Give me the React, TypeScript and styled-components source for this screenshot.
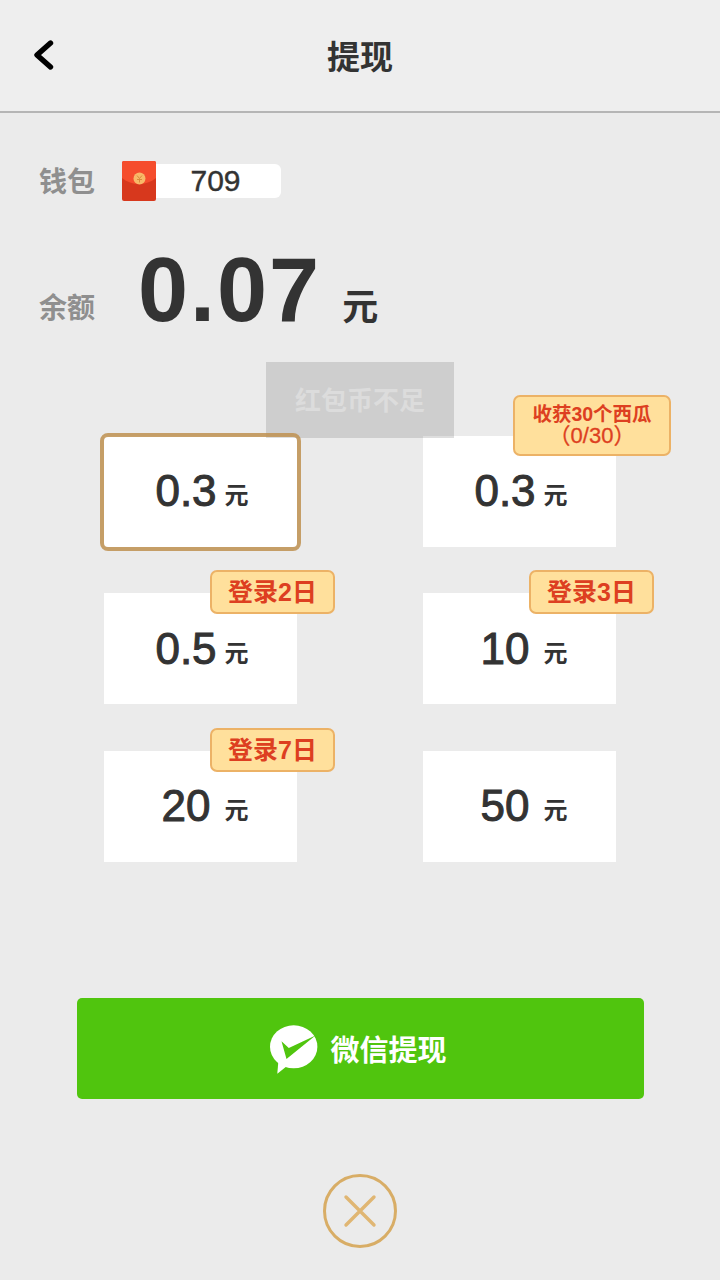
import React from "react";
import styled, { createGlobalStyle } from "styled-components";

const Global = createGlobalStyle`
  html, body { margin: 0; padding: 0; background: #ebebeb; }
  * { box-sizing: border-box; }
  body { font-family: "Liberation Sans", "Noto Sans CJK SC", sans-serif; color: #333; }
`;

const Page = styled.div`
  position: relative;
  width: 720px;
  height: 1280px;
  background: #ebebeb;
  overflow: hidden;
`;

const Header = styled.header`
  position: relative;
  height: 113px;
  background: #eeeeee;
  border-bottom: 2px solid #b5b5b5;
  display: flex;
  align-items: center;
  justify-content: center;
  padding-top: 3px;
`;

const BackButton = styled.button`
  position: absolute;
  left: 31px;
  top: 37px;
  width: 26px;
  height: 36px;
  padding: 0;
  border: 0;
  background: none;
  display: block;
`;

const Title = styled.h1`
  margin: 0;
  font-size: 33px;
  line-height: 1;
  font-weight: 700;
  color: #333;
`;

const InfoRow = styled.div<{ $top: number }>`
  display: flex;
  align-items: center;
  padding-left: 39px;
  margin-top: ${(p) => p.$top}px;
`;

const Label = styled.span<{ $low?: boolean }>`
  font-size: 28px;
  line-height: 36px;
  font-weight: 700;
  color: #8f8f8f;
  width: 83px;
  ${(p) => (p.$low ? "align-self: flex-end; margin-bottom: 13px;" : "margin-top: 4px;")}
`;

const Wallet = styled.div`
  display: flex;
  align-items: center;
  width: 159px;
  height: 40px;
`;

const WalletValue = styled.div`
  width: 125px;
  height: 34px;
  background: #fff;
  border-radius: 0 6px 6px 0;
  font-size: 30px;
  line-height: 34px;
  text-align: center;
  color: #333;
  padding-right: 6px;
  -webkit-text-stroke: 0.4px #333;
`;

const Amount = styled.span`
  font-size: 90px;
  font-weight: 700;
  letter-spacing: 2px;
  line-height: 100px;
  margin-left: 16px;
  padding-top: 1px;
  color: #333;
`;

const AmountUnit = styled.span`
  font-size: 36px;
  font-weight: 700;
  margin-left: 21px;
  line-height: 50px;
  align-self: flex-end;
  margin-bottom: 7px;
  color: #333;
`;

const Toast = styled.div`
  position: absolute;
  left: 266px;
  top: 362px;
  width: 188px;
  height: 76px;
  padding-bottom: 3px;
  background: rgba(90, 90, 90, 0.2);
  color: #dcdcdc;
  font-size: 26px;
  font-weight: 700;
  display: flex;
  align-items: center;
  justify-content: center;
  z-index: 5;
`;

const Grid = styled.div`
  display: grid;
  grid-template-columns: 193px 193px;
  grid-auto-rows: 111px;
  column-gap: 126px;
  row-gap: 46.5px;
  margin: 95.8px 0 0 104px;
`;

const Card = styled.div<{ $selected?: boolean }>`
  position: relative;
  background: #fff;
  display: flex;
  align-items: center;
  justify-content: center;
  padding-left: 2px;
  ${(p) =>
    p.$selected
      ? `&::after { content: ""; position: absolute; left: -4px; right: -4px; top: -3px; bottom: -4px; border: 4px solid rgba(190, 145, 80, 0.85); border-radius: 8px; z-index: 6; }`
      : ""}
`;

const Price = styled.span`
  font-size: 44px;
  line-height: 50px;
  color: #333;
  -webkit-text-stroke: 1px #333;
  min-width: 63px;
  text-align: center;
`;

const Unit = styled.span`
  font-size: 24px;
  font-weight: 700;
  color: #333;
  margin-left: 7px;
  margin-top: 10px;
  line-height: 30px;
`;

const Badge = styled.div<{ $wide?: boolean }>`
  position: absolute;
  z-index: 7;
  top: ${(p) => (p.$wide ? -41 : -23)}px;
  right: ${(p) => (p.$wide ? -55 : -38)}px;
  width: ${(p) => (p.$wide ? 158 : 125)}px;
  height: ${(p) => (p.$wide ? 61 : 44)}px;
  background: #ffe09c;
  border: 2px solid #ecb266;
  border-radius: 7px;
  color: #dd3f21;
  font-weight: 700;
  font-size: ${(p) => (p.$wide ? 19.5 : 25)}px;
  line-height: ${(p) => (p.$wide ? 22 : 38)}px;
  text-align: center;
  display: flex;
  flex-direction: column;
  justify-content: center;
`;

const BadgeSub = styled.span`
  font-weight: 400;
  font-size: 22px;
  -webkit-text-stroke: 0.3px #dd3f21;
`;

const WechatButton = styled.button`
  display: flex;
  align-items: center;
  justify-content: center;
  gap: 11px;
  width: 567px;
  height: 101px;
  margin: 136.2px 0 0 77px;
  padding: 0 5px 0 0;
  border: 0;
  border-radius: 5px;
  background: #50c50e;
  color: #fff;
  font-family: inherit;
  font-size: 29px;
  font-weight: 700;
`;

const WechatLogo = styled.svg`
  margin-top: 1px;
`;

const CloseButton = styled.button`
  display: block;
  width: 74px;
  height: 74px;
  margin: 75px 0 0 323px;
  padding: 0;
  border: 0;
  background: none;
`;

const plans = [
  { price: "0.3", selected: true },
  { price: "0.3", wide: true },
  { price: "0.5", badge: "登录2日" },
  { price: "10", badge: "登录3日" },
  { price: "20", badge: "登录7日" },
  { price: "50" },
];

export default function App() {
  return (
    <Page>
      <Global />
      <Header>
        <BackButton aria-label="返回">
          <svg width="26" height="36" viewBox="0 0 26 36" fill="none">
            <path d="M19.500 6 L6 18 L19.500 30" stroke="#000" strokeWidth="5.400" strokeLinecap="round" strokeLinejoin="round" />
          </svg>
        </BackButton>
        <Title>提现</Title>
      </Header>
      <InfoRow $top={48}>
        <Label>钱包</Label>
        <Wallet>
          <svg width="34" height="40" viewBox="0 0 34 40">
            <rect width="34" height="40" rx="2" fill="#d7381d" />
            <path d="M0 2a2 2 0 0 1 2-2h30a2 2 0 0 1 2 2v15c-5 4-11 6-17 6S5 21 0 17z" fill="#f54d2d" />
            <circle cx="17.500" cy="17.500" r="6" fill="#f8b968" />
            <path d="M15 14.500l2.500 3 2.500-3M17.500 17.500v4M15 18.500h5" stroke="#d98b3c" strokeWidth="1" fill="none" />
          </svg>
          <WalletValue>709</WalletValue>
        </Wallet>
      </InfoRow>
      <InfoRow $top={38}>
        <Label $low>余额</Label>
        <Amount>0.07</Amount>
        <AmountUnit>元</AmountUnit>
      </InfoRow>
      <Toast>红包币不足</Toast>
      <Grid>
        {plans.map((p, i) => (
          <Card key={i} $selected={p.selected}>
            <Price>{p.price}</Price>
            <Unit>元</Unit>
            {p.badge && <Badge>{p.badge}</Badge>}
            {p.wide && (
              <Badge $wide>
                <span>收获30个西瓜</span>
                <BadgeSub>（0/30）</BadgeSub>
              </Badge>
            )}
          </Card>
        ))}
      </Grid>
      <WechatButton>
        <WechatLogo width="50" height="52" viewBox="0 0 50 52">
          <ellipse cx="24.700" cy="23.800" rx="23.700" ry="21.500" fill="#fff" />
          <path d="M9.300 39 L8.300 50.700 L18 43z" fill="#fff" />
          <path d="M12.500 18.300 L19.800 25 L46.500 12.500 L17.500 36z" fill="#50c50e" />
        </WechatLogo>
        微信提现
      </WechatButton>
      <CloseButton aria-label="关闭">
        <svg width="74" height="74" viewBox="0 0 74 74" fill="none">
          <circle cx="37" cy="37" r="35.500" stroke="#d8ad66" strokeWidth="3" />
          <path d="M23 23l28 28M51 23L23 51" stroke="#e0b673" strokeWidth="3.400" strokeLinecap="round" />
        </svg>
      </CloseButton>
    </Page>
  );
}
